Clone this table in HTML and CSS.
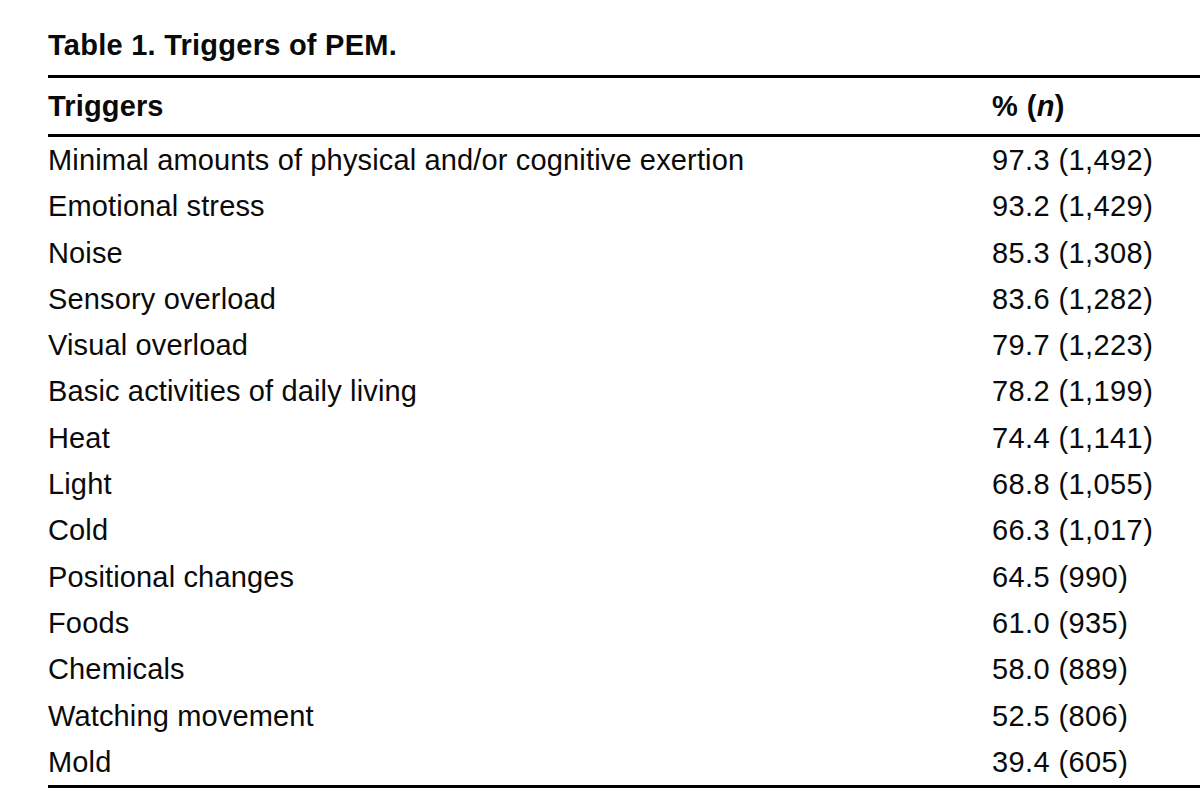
FILE: index.html
```html
<!DOCTYPE html>
<html>
<head>
<meta charset="utf-8">
<link rel="stylesheet" href="styles.css">
</head>
<body>
<div class="page">
  <h1 class="caption">Table 1. Triggers of PEM.</h1>
  <table class="data">
    <thead>
      <tr><th class="col-a">Triggers</th><th class="col-b">% (<i>n</i>)</th></tr>
    </thead>
    <tbody>
      <tr><td class="col-a">Minimal amounts of physical and/or cognitive exertion</td><td class="col-b">97.3 (1,492)</td></tr>
      <tr><td class="col-a">Emotional stress</td><td class="col-b">93.2 (1,429)</td></tr>
      <tr><td class="col-a">Noise</td><td class="col-b">85.3 (1,308)</td></tr>
      <tr><td class="col-a">Sensory overload</td><td class="col-b">83.6 (1,282)</td></tr>
      <tr><td class="col-a">Visual overload</td><td class="col-b">79.7 (1,223)</td></tr>
      <tr><td class="col-a">Basic activities of daily living</td><td class="col-b">78.2 (1,199)</td></tr>
      <tr><td class="col-a">Heat</td><td class="col-b">74.4 (1,141)</td></tr>
      <tr><td class="col-a">Light</td><td class="col-b">68.8 (1,055)</td></tr>
      <tr><td class="col-a">Cold</td><td class="col-b">66.3 (1,017)</td></tr>
      <tr><td class="col-a">Positional changes</td><td class="col-b">64.5 (990)</td></tr>
      <tr><td class="col-a">Foods</td><td class="col-b">61.0 (935)</td></tr>
      <tr><td class="col-a">Chemicals</td><td class="col-b">58.0 (889)</td></tr>
      <tr><td class="col-a">Watching movement</td><td class="col-b">52.5 (806)</td></tr>
      <tr><td class="col-a">Mold</td><td class="col-b">39.4 (605)</td></tr>
    </tbody>
  </table>
</div>
</body>
</html>
```
FILE: styles.css
```css
html, body {
  margin: 0;
  padding: 0;
  background: #ffffff;
}
.page {
  padding: 0 0 0 48px;
  font-family: "Liberation Sans", Arial, sans-serif;
  color: #0a0a0a;
}
.caption {
  margin: 0;
  padding-top: 29px;
  font-size: 29px;
  letter-spacing: 0.25px;
  line-height: 32px;
  font-weight: bold;
  height: 46px;
}
.data {
  width: 100%;
  border-collapse: collapse;
  font-size: 29px;
  letter-spacing: 0.15px;
}
.data thead tr {
  border-top: 3px solid #000;
  border-bottom: 3px solid #000;
}
.data tbody tr:last-child {
  border-bottom: 3px solid #000;
}
.data th {
  text-align: left;
  font-weight: bold;
  height: 56px;
  padding: 0;
  line-height: 56px;
}
.data td {
  padding: 0;
  height: 46.3px;
  line-height: 46.3px;
}
.col-a {
  width: 944px;
}
.col-b {
  text-align: left;
  letter-spacing: 0.4px;
}
.data th i {
  font-style: italic;
}
```
